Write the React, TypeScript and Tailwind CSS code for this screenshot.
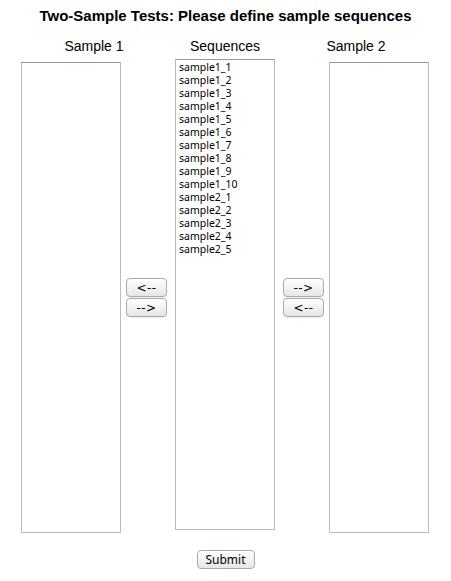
import React from 'react';

const sequences = [
  'sample1_1', 'sample1_2', 'sample1_3', 'sample1_4', 'sample1_5',
  'sample1_6', 'sample1_7', 'sample1_8', 'sample1_9', 'sample1_10',
  'sample2_1', 'sample2_2', 'sample2_3', 'sample2_4', 'sample2_5',
];

function ListBox({ items = [] }: { items?: string[] }) {
  return (
    <div className="w-[100px] h-[471px] border border-[#bcbcbc] border-t-[#999] bg-white pt-[1px] pl-[3px] font-['Noto_Sans',sans-serif] text-[10.5px] leading-[13px] text-black">
      {items.map((s) => (
        <div key={s}>{s}</div>
      ))}
    </div>
  );
}

function SmallButton({ label }: { label: string }) {
  return (
    <button className="w-[41px] h-[19px] rounded-[4px] border border-[#aaa] bg-gradient-to-b from-white to-[#e6e6e6] font-['DejaVu_Sans',sans-serif] text-[12px] leading-none tracking-[0.5px] text-black shadow-[0_1px_0_rgba(0,0,0,0.06)]">
      {label}
    </button>
  );
}

export default function App() {
  return (
    <div className="w-[451px] h-[581px] bg-white font-['Liberation_Sans',Arial,sans-serif] text-black">
      <h1 className="pt-[7px] text-center text-[15px] font-bold leading-[18px]">
        Two-Sample Tests: Please define sample sequences
      </h1>

      <div className="flex gap-[8px] pl-[21px] pt-[13px]">
        {/* Sample 1 */}
        <div className="w-[146px] flex flex-col">
          <div className="text-center text-[14px] leading-[16px]">Sample 1</div>
          <div className="flex items-center gap-[5px] mt-[8px]">
            <ListBox />
            <div className="flex flex-col gap-[1px]">
              <SmallButton label="<--" />
              <SmallButton label="-->" />
            </div>
          </div>
        </div>

        {/* Sequences */}
        <div className="w-[100px] flex flex-col">
          <div className="text-center text-[14px] leading-[16px]">Sequences</div>
          <div className="mt-[5px]">
            <ListBox items={sequences} />
          </div>
        </div>

        {/* Sample 2 */}
        <div className="w-[146px] flex flex-col">
          <div className="text-center text-[14px] leading-[16px]">Sample 2</div>
          <div className="flex items-center gap-[5px] mt-[8px]">
            <div className="flex flex-col gap-[1px]">
              <SmallButton label="-->" />
              <SmallButton label="<--" />
            </div>
            <ListBox />
          </div>
        </div>
      </div>

      <div className="flex justify-center mt-[17px]">
        <button className="w-[58px] h-[19px] rounded-[4px] border border-[#aaa] bg-gradient-to-b from-white to-[#e6e6e6] font-['Noto_Sans',sans-serif] text-[12px] leading-none text-black">
          Submit
        </button>
      </div>
    </div>
  );
}
